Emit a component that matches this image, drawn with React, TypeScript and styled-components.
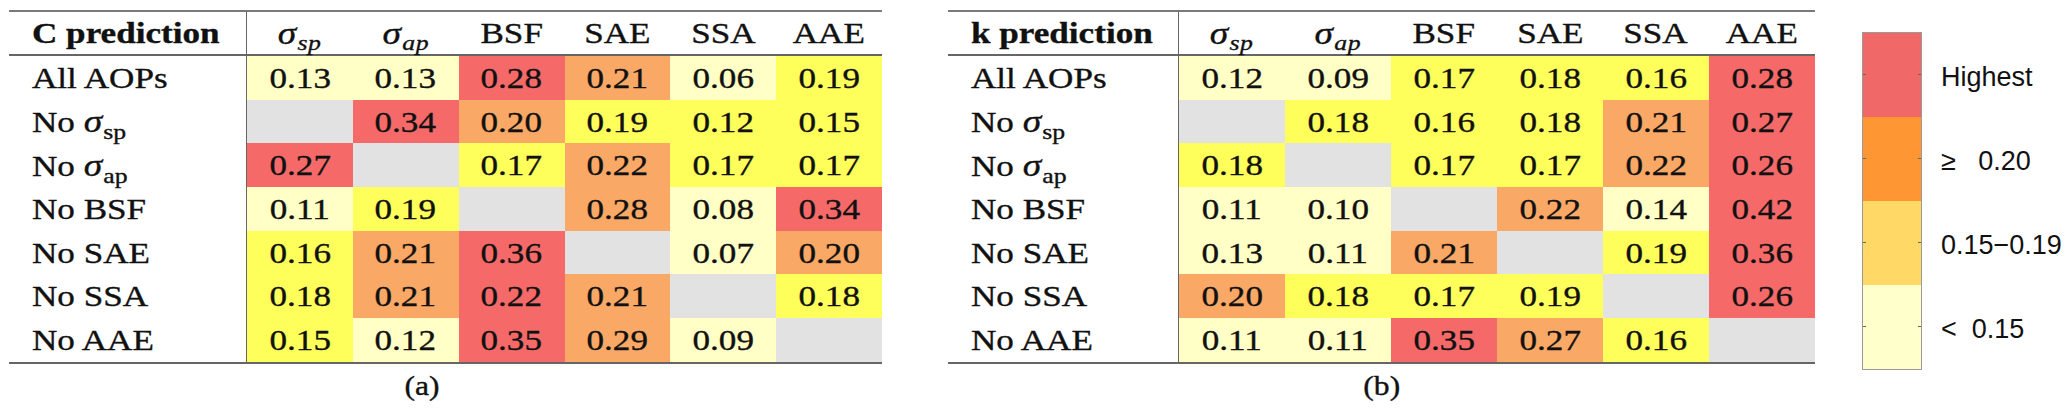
import React, { ReactElement, ReactNode } from 'react';
import styled, { createGlobalStyle } from 'styled-components';

type Tone = 'red' | 'orange' | 'yellow' | 'pale' | 'gray';

const TONES: Record<Tone, string> = {
    red: '#f56a69',
    orange: '#f9a866',
    yellow: '#ffff5c',
    pale: '#ffffc6',
    gray: '#e2e2e2',
};

// one cell: [value, tone]  (empty value = the removed AOP)
type Cell = [string, Tone];

const ROW_NAMES = ['All AOPs', 'sp', 'ap', 'No BSF', 'No SAE', 'No SSA', 'No AAE'];

const C_DATA: Cell[][] = [
    [['0.13', 'pale'], ['0.13', 'pale'], ['0.28', 'red'], ['0.21', 'orange'], ['0.06', 'pale'], ['0.19', 'yellow']],
    [['', 'gray'], ['0.34', 'red'], ['0.20', 'orange'], ['0.19', 'yellow'], ['0.12', 'yellow'], ['0.15', 'yellow']],
    [['0.27', 'red'], ['', 'gray'], ['0.17', 'yellow'], ['0.22', 'orange'], ['0.17', 'yellow'], ['0.17', 'yellow']],
    [['0.11', 'pale'], ['0.19', 'yellow'], ['', 'gray'], ['0.28', 'orange'], ['0.08', 'pale'], ['0.34', 'red']],
    [['0.16', 'yellow'], ['0.21', 'orange'], ['0.36', 'red'], ['', 'gray'], ['0.07', 'pale'], ['0.20', 'orange']],
    [['0.18', 'yellow'], ['0.21', 'orange'], ['0.22', 'red'], ['0.21', 'orange'], ['', 'gray'], ['0.18', 'yellow']],
    [['0.15', 'yellow'], ['0.12', 'pale'], ['0.35', 'red'], ['0.29', 'orange'], ['0.09', 'pale'], ['', 'gray']],
];

const K_DATA: Cell[][] = [
    [['0.12', 'pale'], ['0.09', 'pale'], ['0.17', 'yellow'], ['0.18', 'yellow'], ['0.16', 'yellow'], ['0.28', 'red']],
    [['', 'gray'], ['0.18', 'yellow'], ['0.16', 'yellow'], ['0.18', 'yellow'], ['0.21', 'orange'], ['0.27', 'red']],
    [['0.18', 'yellow'], ['', 'gray'], ['0.17', 'yellow'], ['0.17', 'yellow'], ['0.22', 'orange'], ['0.26', 'red']],
    [['0.11', 'pale'], ['0.10', 'pale'], ['', 'gray'], ['0.22', 'orange'], ['0.14', 'pale'], ['0.42', 'red']],
    [['0.13', 'pale'], ['0.11', 'pale'], ['0.21', 'orange'], ['', 'gray'], ['0.19', 'yellow'], ['0.36', 'red']],
    [['0.20', 'orange'], ['0.18', 'yellow'], ['0.17', 'yellow'], ['0.19', 'yellow'], ['', 'gray'], ['0.26', 'red']],
    [['0.11', 'pale'], ['0.11', 'pale'], ['0.35', 'red'], ['0.27', 'orange'], ['0.16', 'yellow'], ['', 'gray']],
];

const LEGEND = [
    { color: '#f16868', label: 'Highest' },
    { color: '#fe9634', label: '≥   0.20' },
    { color: '#ffd866', label: '0.15−0.19' },
    { color: '#ffffcc', label: '<  0.15' },
];

const RowName = ({ name }: { name: string }): ReactElement => {
    // sigma rows get an upright subscript
    if (name === 'sp' || name === 'ap') {
        return (
            <>
                No <Sigma>σ</Sigma>
                <RowSub>{name}</RowSub>
            </>
        );
    }
    return <>{name}</>;
};

const SigmaHead = ({ sub }: { sub: string }): ReactElement => (
    <>
        <Sigma>σ</Sigma>
        <HeadSub>{sub}</HeadSub>
    </>
);

const ScoreTable = ({
    title,
    data,
    width,
    labelWidth,
    caption,
    captionShift,
}: {
    title: string;
    data: Cell[][];
    width: number;
    labelWidth: number;
    caption: string;
    captionShift: number;
}): ReactElement => {
    const heads: ReactNode[] = [
        <SigmaHead key="sp" sub="sp" />,
        <SigmaHead key="ap" sub="ap" />,
        'BSF',
        'SAE',
        'SSA',
        'AAE',
    ];
    return (
        <Figure $width={width}>
            <Grid $labelWidth={labelWidth}>
                <HeadLabel>
                    <Stretch $left>
                        <b>{title}</b>
                    </Stretch>
                </HeadLabel>
                {heads.map((h, i) => (
                    <HeadCell key={i}>
                        <Stretch>{h}</Stretch>
                    </HeadCell>
                ))}
                {data.map((row, i) => (
                    <React.Fragment key={i}>
                        <RowLabel>
                            <Stretch $left>
                                <RowName name={ROW_NAMES[i]} />
                            </Stretch>
                        </RowLabel>
                        {row.map(([v, tone], j) => (
                            <DataCell key={j} $tone={tone}>
                                <Stretch>{v}</Stretch>
                            </DataCell>
                        ))}
                    </React.Fragment>
                ))}
            </Grid>
            <Caption $shift={captionShift}>
                <Stretch>{caption}</Stretch>
            </Caption>
        </Figure>
    );
};

const GlobalStyle = createGlobalStyle`
    body {
        margin: 0;
        background: #fff;
    }
`;

const Page = styled.div`
    display: flex;
    align-items: flex-start;
    width: 2067px;
    height: 410px;
    box-sizing: border-box;
    padding: 10px 0 0 9px;
    background: #fff;
    color: #111;
    font-family: 'Liberation Serif', 'Times New Roman', serif;
    overflow: hidden;
`;

const Spacer = styled.div<{ $w: number }>`
    flex: none;
    width: ${(p) => p.$w}px;
`;

const Figure = styled.div<{ $width: number }>`
    flex: none;
    display: flex;
    flex-direction: column;
    width: ${(p) => p.$width}px;
`;

const Grid = styled.div<{ $labelWidth: number }>`
    display: grid;
    grid-template-columns: ${(p) => p.$labelWidth}px repeat(6, 1fr);
    border-top: 2px solid #7a7a7a;
    border-bottom: 2px solid #666;
    font-size: 30px;
`;

// the figure was scaled wider than tall, so the serif text is stretched
const Stretch = styled.span<{ $left?: boolean }>`
    display: inline-block;
    white-space: nowrap;
    transform: scaleX(1.17);
    transform-origin: ${(p) => (p.$left ? 'left center' : 'center')};
    -webkit-text-stroke: 0.35px #111;
`;

const HeadCell = styled.div`
    height: 42px;
    display: flex;
    align-items: center;
    justify-content: center;
    border-bottom: 2px solid #666;
`;

const HeadLabel = styled(HeadCell)`
    justify-content: flex-start;
    padding-left: 23px;
    border-right: 1px solid #666;
`;

const RowLabel = styled.div`
    height: 43.7px;
    display: flex;
    align-items: center;
    padding-left: 23px;
    border-right: 1px solid #666;
`;

const DataCell = styled.div<{ $tone: Tone }>`
    height: 43.7px;
    display: flex;
    align-items: center;
    justify-content: center;
    background: ${(p) => TONES[p.$tone]};
`;

const Sigma = styled.i`
    font-style: italic;
    font-size: 32px;
`;

const HeadSub = styled.i`
    font-size: 22px;
    position: relative;
    top: 6px;
    margin-left: 1px;
    letter-spacing: 0.5px;
`;

const RowSub = styled.span`
    font-size: 22px;
    position: relative;
    top: 7px;
    margin-left: 1px;
`;

const Caption = styled.div<{ $shift: number }>`
    display: flex;
    justify-content: center;
    margin-top: 7px;
    height: 32px;
    align-items: center;
    font-size: 27px;
    padding-right: ${(p) => (p.$shift < 0 ? -p.$shift : 0)}px;
`;

const Legend = styled.div`
    flex: none;
    display: flex;
    margin-top: 22px;
    font-family: 'Liberation Sans', Arial, sans-serif;
`;

const ColorBar = styled.div`
    display: flex;
    flex-direction: column;
    width: 58px;
    border: 1px solid #9a9a9a;
`;

const Swatch = styled.div<{ $color: string }>`
    position: relative;
    height: 84px;
    background: ${(p) => p.$color};
    &::before,
    &::after {
        content: '';
        position: absolute;
        top: 41px;
        width: 3px;
        height: 1px;
        background: #666;
    }
    &::before {
        left: 0;
    }
    &::after {
        right: 0;
    }
`;

const Labels = styled.div`
    display: flex;
    flex-direction: column;
    padding-left: 19px;
`;

const LegendLabel = styled.div`
    height: 84px;
    display: flex;
    align-items: center;
    padding-top: 6px;
    box-sizing: border-box;
    font-size: 27px;
    white-space: pre;
    color: #111;
`;

const App = (): ReactElement => (
    <>
        <GlobalStyle />
        <Page>
            <ScoreTable
                title="C prediction"
                data={C_DATA}
                width={873}
                labelWidth={238}
                caption="(a)"
                captionShift={-48}
            />
            <Spacer $w={66} />
            <ScoreTable
                title="k prediction"
                data={K_DATA}
                width={867}
                labelWidth={231}
                caption="(b)"
                captionShift={0}
            />
            <Spacer $w={47} />
            <Legend>
                <ColorBar>
                    {LEGEND.map((l) => (
                        <Swatch key={l.label} $color={l.color} />
                    ))}
                </ColorBar>
                <Labels>
                    {LEGEND.map((l) => (
                        <LegendLabel key={l.label}>{l.label}</LegendLabel>
                    ))}
                </Labels>
            </Legend>
        </Page>
    </>
);

export default App;
